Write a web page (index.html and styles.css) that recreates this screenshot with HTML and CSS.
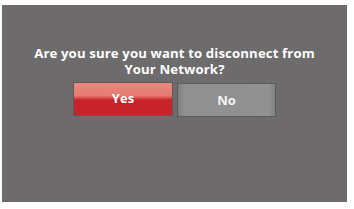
FILE: index.html
```html
<!DOCTYPE html>
<html>
<head>
<meta charset="utf-8">
<link rel="stylesheet" href="styles.css">
</head>
<body>
<div class="panel">
  <div class="title">Are you sure you want to disconnect from<br>Your Network?</div>
  <div class="actions">
    <div class="btn btn-yes">Yes</div>
    <div class="btn btn-no">No</div>
  </div>
</div>
</body>
</html>
```
FILE: styles.css
```css
html, body {
  margin: 0;
  padding: 0;
  background: #ffffff;
}
body {
  width: 354px;
  height: 209px;
  overflow: hidden;
}
.panel {
  margin: 5px 0 0 2px;
  width: 345px;
  height: 197px;
  background: #6d6b6c;
  display: flex;
  flex-direction: column;
  align-items: center;
  font-family: "Open Sans", "Liberation Sans", sans-serif;
  color: #ffffff;
}
.title {
  margin-top: 40px;
  font-size: 13.2px;
  font-weight: 700;
  line-height: 16px;
  text-align: center;
  letter-spacing: 0.12px;
}
.actions {
  display: flex;
  gap: 6px;
  margin-top: 6px;
}
.btn {
  box-sizing: border-box;
  width: 98px;
  height: 32px;
  display: flex;
  align-items: center;
  justify-content: center;
  font-size: 13px;
  font-weight: 700;
  outline: 1px solid #5c5a5b;
}
.btn-yes {
  background: linear-gradient(to bottom, #e98a7e 0%, #e67a70 40%, #d44040 48%, #c8222b 55%, #c8222b 100%);
  padding-bottom: 3px;
}
.btn-no {
  width: 97px;
  margin-top: 1px;
  background: linear-gradient(to right, #7f7f7f 0%, #909090 6%, #919191 94%, #808080 100%);
  color: #f4f4f4;
}
```
